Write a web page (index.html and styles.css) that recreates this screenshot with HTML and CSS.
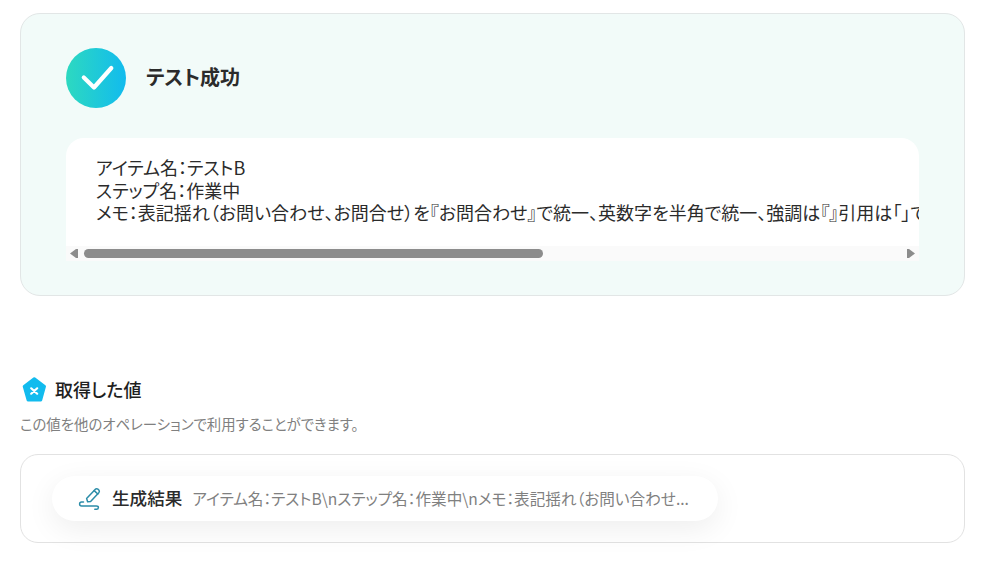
FILE: index.html
```html
<!DOCTYPE html>
<html lang="ja">
<head>
<meta charset="utf-8">
<title>テスト成功</title>
<link rel="stylesheet" href="styles.css">
</head>
<body>
<main class="page">
  <section class="result-card">
    <div class="result-head">
      <svg class="check-icon" width="60" height="60" viewBox="0 0 60 60">
        <defs>
          <linearGradient id="cg" x1="0" y1="0" x2="1" y2="0">
            <stop offset="0" stop-color="#2dd9c0"/>
            <stop offset="1" stop-color="#12bbee"/>
          </linearGradient>
        </defs>
        <circle cx="30" cy="30" r="30" fill="url(#cg)"/>
        <path d="M17.8 29.5 L28 39.5 L45.3 20" fill="none" stroke="#fff" stroke-width="4.2" stroke-linecap="round" stroke-linejoin="round"/>
      </svg>
      <h1 class="result-title">テスト成功</h1>
    </div>
    <div class="output-box">
      <div class="output-text">
        <div class="line">アイテム名：テストB</div>
        <div class="line">ステップ名：作業中</div>
        <div class="line">メモ：表記揺れ（お問い合わせ、お問合せ）を『お問合わせ』で統一、英数字を半角で統一、強調は『』引用は「」で統一しました。</div>
      </div>
      <div class="scrollbar">
        <svg class="arrow-left" width="8" height="9" viewBox="0 0 8 9"><path d="M8 0 H6 L0 4.5 L6 9 H8 Z" fill="#8c8c8c"/></svg>
        <div class="track"><div class="thumb"></div></div>
        <svg class="arrow-right" width="8" height="9" viewBox="0 0 8 9"><path d="M0 0 H2 L8 4.5 L2 9 H0 Z" fill="#8c8c8c"/></svg>
      </div>
    </div>
  </section>

  <section class="values">
    <div class="values-head">
      <svg class="pent-icon" width="26" height="26" viewBox="0 0 26 26">
        <path d="M12.3 2.8 L22.5 10.4 L18.7 24 L6.1 24 L2.2 10.4 Z" fill="#12bbee" stroke="#12bbee" stroke-width="3" stroke-linejoin="round"/>
        <path d="M9.2 12.3 L15.2 17.7 M15.2 12.3 L9.2 17.7" stroke="#fff" stroke-width="2.2" stroke-linecap="round"/>
      </svg>
      <h2 class="values-title">取得した値</h2>
    </div>
    <p class="values-note">この値を他のオペレーションで利用することができます。</p>
    <div class="values-box">
      <div class="pill">
        <svg class="pen-icon" width="24" height="24" viewBox="0 0 24 24" fill="none" stroke="#2b8ca8" stroke-width="1.5" stroke-linecap="round" stroke-linejoin="round">
          <path d="M9.6 14.8 L8.6 11.4 L17.4 2.2 Q18.6 1.2 20 2.2 L21 3.2 Q21.8 4.6 20.8 5.8 L12.6 14.6 Z"/>
          <path d="M16.2 3.6 L19.8 7"/>
          <path d="M5.5 15 H3.6 Q1.6 15 1.6 17 Q1.6 19 3.6 19 H18.4 Q20.4 19 20.4 20.6 Q20.4 22.2 18.6 22.2 H16.8"/>
        </svg>
        <span class="pill-label">生成結果</span>
        <span class="pill-value">アイテム名：テストB\nステップ名：作業中\nメモ：表記揺れ（お問い合わせ...</span>
      </div>
    </div>
  </section>
</main>
</body>
</html>
```
FILE: styles.css
```css
* { box-sizing: border-box; }
html, body { margin: 0; padding: 0; background: #fff; }
body {
  font-family: "Noto Sans CJK JP", "Noto Sans", sans-serif;
  font-feature-settings: "palt";
  color: #2b2b2b;
  overflow: hidden;
}
.page { width: 996px; height: 579px; padding: 13px 31px 0 20px; }
.result-card {
  height: 283px;
  padding: 34px 45px 33px;
  background: #f2fbf9;
  border: 1px solid #e2e6e6;
  border-radius: 20px;
}
.result-head { display: flex; align-items: center; gap: 20px; height: 60px; }
.check-icon { display: block; flex: none; }
.result-title { margin: 0 0 2px; font-size: 20px; font-weight: 600; line-height: 1.4; color: #2b2b2b; }
.output-box {
  margin-top: 30px;
  height: 123px;
  width: 853px;
  background: #fff;
  border-radius: 18px 18px 0 0;
  display: flex;
  flex-direction: column;
  overflow: hidden;
}
.output-text {
  flex: 1;
  padding: 18px 0 0 30px;
  font-size: 18px;
  line-height: 22.5px;
  white-space: nowrap;
  overflow: hidden;
  color: #2b2b2b;
}
.scrollbar {
  height: 15px;
  flex: none;
  background: #fafafa;
  display: flex;
  align-items: center;
}
.arrow-left { display: block; flex: none; margin-left: 4px; }
.arrow-right { display: block; flex: none; margin-right: 4px; }
.track { flex: 1; height: 9px; padding: 0 5px 0 6px; }
.thumb { width: 459px; height: 9px; background: #8c8c8c; border-radius: 5px; }
.values { margin-top: 80px; }
.values-head { display: flex; align-items: center; gap: 7px; height: 26px; margin-left: 2px; }
.pent-icon { display: block; flex: none; }
.values-title { margin: 0; padding-top: 2px; font-size: 18px; font-weight: 500; line-height: 1.4; color: #1f1f1f; }
.values-note { margin: 13px 0 0; font-size: 14.4px; line-height: 18px; color: #808080; }
.values-box {
  margin-top: 21px;
  height: 89px;
  padding: 21px 31px;
  border: 1px solid #e2e2e2;
  border-radius: 18px;
}
.pill {
  display: flex;
  align-items: center;
  width: 666px;
  height: 45px;
  padding: 0 20px 0 26px;
  background: #fff;
  border-radius: 23px;
  box-shadow: 0 8px 30px rgba(0, 0, 0, 0.07);
}
.pen-icon { display: block; flex: none; }
.pill-label { margin-left: 10px; font-size: 17.6px; font-weight: 500; line-height: 1.4; color: #2b2b2b; white-space: nowrap; }
.pill-value { margin-left: 10px; font-size: 15.6px; line-height: 1.4; color: #808080; white-space: nowrap; overflow: hidden; }
```
